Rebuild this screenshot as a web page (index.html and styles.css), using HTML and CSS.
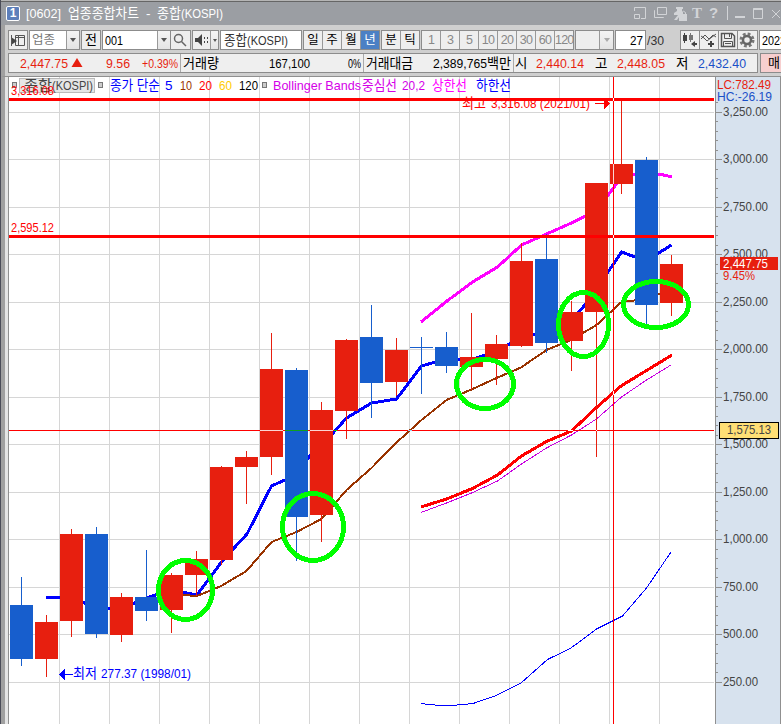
FILE: index.html
```html
<!DOCTYPE html>
<html lang="ko">
<head>
  <meta charset="UTF-8" />
  <meta name="viewport" content="width=device-width, initial-scale=1.0"/>
  <title>[0602] 업종종합차트 - 종합(KOSPI)</title>
  <link rel="stylesheet" href="styles.css">
</head>
<body>
  <div class="window">

    <!-- Title bar -->
    <div class="titlebar">
      <div class="badge">1</div>
      <svg class="title" width="210" height="22">
        <text x="1" y="15" textLength="35">[0602]</text>
        <text x="43" y="15" textLength="71">업종종합차트</text>
        <text x="121" y="15">-</text>
        <text x="132" y="15" textLength="24">종합</text>
        <text x="156" y="15" textLength="42">(KOSPI)</text>
      </svg>
      <svg class="win-icons" width="147" height="22">
        <path d="M.5 8V4.500H11.500V15.500H7M.5 11.500H5.500V15.500H.5Z"/>
        <path d="M23.500 4.500H32.500V11.500H23.500ZM21 7.500H20.500V14.500H29.500V14"/>
        <path class="solid" d="M42 4H49V6H48V9H49V11H47L43 17H40L44 12H40V10L43 8V6H42ZM45 11H53V18H45Z"/>
        <path d="M47.500 12V9.500Q49.500 7 51.500 9.500V12"/>
        <text class="serif" x="58" y="15">T</text>
        <text class="quest" x="75" y="15">?</text>
        <path d="M93.500 3V17"/>
        <path class="bold" d="M101 14H111M119.500 6H128.500"/>
        <path d="M119.500 5.500H128.500V15.500H119.500Z"/>
        <path d="M138 7L146 15M146 7L138 15"/>
      </svg>
    </div>

    <!-- Toolbar -->
    <div class="toolbar">
      <div class="btn w20">
        <svg width="18" height="18"><path class="ln" d="M6.500 4.500H15.500V14.500H6.500ZM6.500 6.500H15.500M9.500 5V14"/><path class="fl" d="M2 6L8 10L2 14Z"/><path class="ln" d="M2.500 4V15"/></svg>
      </div>
      <div class="combo c-type"><span class="dim">업종</span><i class="arrow"></i></div>
      <div class="btn w20 txt">전</div>
      <div class="combo c-code"><svg width="54" height="18"><text x="2" y="14" textLength="18">001</text></svg><i class="arrow"></i></div>
      <div class="btn w20 search">
        <svg width="18" height="18"><circle class="lens" cx="7.500" cy="7.500" r="4"/><path class="lens" d="M10.500 10.500L15 15"/></svg>
      </div>
      <div class="combo c-sound">
        <svg width="17" height="18"><path class="fl" d="M2 7H5L9 3V15L5 11H2Z"/><path class="fl" d="M11 6h1v2h-1zM11 10h1v2h-1zM14 6h1v2h-1zM14 10h1v2h-1z"/></svg>
        <i class="arrow small"></i>
      </div>
      <div class="input c-name"><svg width="80" height="18"><text x="3" y="14" textLength="23">종합</text><text x="26" y="14" textLength="41">(KOSPI)</text></svg></div>
      <div class="group">
        <span>일</span><span>주</span><span>월</span><span class="active">년</span>
      </div>
      <div class="group">
        <span>분</span><span>틱</span>
      </div>
      <div class="group nums">
        <span>1</span><span>3</span><span>5</span><span>10</span><span>20</span><span>30</span><span>60</span><span>120</span>
      </div>
      <div class="combo c-empty"><i class="arrow"></i></div>
      <div class="input c-page"><svg width="29" height="18"><text x="14" y="14" textLength="13">27</text></svg></div>
      <svg class="total" width="34" height="20"><text x="1" y="15" textLength="17">/30</text></svg>
      <div class="icons">
        <div class="btn"><svg width="18" height="18"><path class="fl" d="M2 4h4v6H2zM3 2h1v10H3z"/><path class="mid" d="M8 4h4v5H8zM9 2h1v9H9z"/><path class="fl" d="M10 13L14 10V12H16V14H14V16Z"/></svg></div>
        <div class="btn"><svg width="18" height="18"><path class="ln" d="M1 8L5 4L9 8L13 4L16 6M1 5L4 7L7 10L12 6L16 3"/><path class="fl" d="M10 10h2v2h2v2h-2v2h-2v-2h-2v-2h2z"/></svg></div>
        <div class="btn"><svg width="18" height="18"><path class="ln thick" d="M2.500 2.500H13L15.500 5V15.500H2.500Z"/><path class="ln" d="M5.500 3V7.500H12.500V3M10.500 3V6M4.500 15V10.500H13.500V15M6 12.500H12"/></svg></div>
        <div class="btn"><svg width="20" height="18"><circle class="gear" cx="9" cy="9" r="6"/><circle class="ring" cx="9" cy="9" r="4"/></svg></div>
      </div>
      <div class="input c-date"><svg width="30" height="18"><text x="2" y="14" textLength="24">2023</text></svg></div>
    </div>

    <!-- Quote strip -->
    <div class="quote">
      <div class="cells">
        <svg width="171" height="18">
          <text class="up" x="11" y="14" textLength="48">2,447.75</text>
          <path class="tri" d="M68 4L73.500 13H62.500Z"/>
          <text class="up" x="97" y="14" textLength="24">9.56</text>
          <text class="up" x="133" y="14" textLength="36">+0.39%</text>
        </svg>
        <svg class="cell" width="183" height="18">
          <text x="2" y="14" textLength="36">거래량</text>
          <text x="88" y="14" textLength="41">167,100</text>
          <text x="167" y="14" textLength="13">0%</text>
        </svg>
        <svg class="cell" width="150" height="18">
          <text x="2" y="14" textLength="47">거래대금</text>
          <text x="69" y="14" textLength="54">2,389,765</text>
          <text x="123" y="14" textLength="24">백만</text>
        </svg>
        <svg class="cell" width="244" height="18">
          <text x="1" y="14">시</text>
          <text class="up" x="22" y="14" textLength="48">2,440.14</text>
          <text x="81" y="14">고</text>
          <text class="up" x="103" y="14" textLength="48">2,448.05</text>
          <text x="162" y="14">저</text>
          <text class="down" x="184" y="14" textLength="48">2,432.40</text>
        </svg>
      </div>
      <div class="sell">매</div>
    </div>

    <!-- Chart: plot and price axis, both in window coordinates -->
    <div class="chart">
      <svg id="plot" width="706" height="647" viewBox="9 77 706 647">
        <g id="grid"></g>
        <g class="legend">
          <rect class="dot" x="12.500" y="82.500" width="4" height="5"/>
          <rect class="tag" x="19.500" y="78.500" width="75" height="14"/>
          <text x="24" y="90" textLength="28" fill="#444">종합</text>
          <text x="52" y="90" textLength="41" fill="#444">(KOSPI)</text>
          <rect class="dot" x="98.500" y="82.500" width="4" height="5"/>
          <text x="110" y="90" textLength="50" fill="#00f">종가 단순</text>
          <text x="165" y="90" fill="#00f">5</text>
          <text x="180" y="90" textLength="12" fill="#993300">10</text>
          <text x="199" y="90" textLength="13" fill="#f00">20</text>
          <text x="219" y="90" textLength="13" fill="#fc0">60</text>
          <text x="239" y="90" textLength="19" fill="#000">120</text>
          <rect class="dot" x="262.500" y="82.500" width="4" height="5"/>
          <text x="273" y="90" textLength="88" fill="#d400e8">Bollinger Bands</text>
          <text x="362" y="90" textLength="35" fill="#d400e8">중심선</text>
          <text x="402" y="90" textLength="23" fill="#d400e8">20,2</text>
          <text x="432" y="90" textLength="35" fill="#f0f">상한선</text>
          <text x="476" y="90" textLength="35" fill="#00f">하한선</text>
        </g>
        <text class="red" x="11" y="95" textLength="43">3,316.08</text>
        <text class="red" x="11" y="232" textLength="43">2,595.12</text>
        <text class="red" x="462" y="108" textLength="24">최고</text>
        <text class="red" x="491" y="108" textLength="99">3,316.08 (2021/01)</text>
        <path class="red" d="M595 103H604V98L610 103.500L604 109V104H595Z"/>
        <text class="blue" x="73" y="678" textLength="24">최저</text>
        <text class="blue" x="101" y="678" textLength="90">277.37 (1998/01)</text>
        <path class="blue" d="M73 674H65V669L59 674.500L65 680V675H73Z"/>
        <g id="lines"></g>
        <g id="candles"></g>
        <g class="levels">
          <rect x="9" y="98" width="705" height="3"/>
          <rect x="9" y="235" width="705" height="3"/>
          <rect x="9" y="430" width="705" height="1"/>
          <rect x="613" y="77" width="1" height="647"/>
        </g>
        <g id="crossings"></g>
        <g class="marks">
          <ellipse cx="185.500" cy="590" rx="27" ry="29.500"/>
          <ellipse cx="313" cy="527" rx="30.500" ry="33.500"/>
          <ellipse cx="485" cy="384" rx="28.500" ry="24.500"/>
          <ellipse cx="583.500" cy="324.500" rx="25" ry="32"/>
          <ellipse cx="656" cy="304.500" rx="32.500" ry="23"/>
        </g>
      </svg>
      <svg id="axis" width="66" height="647" viewBox="715 77 66 647">
        <rect class="axis-bg" x="715" y="77" width="66" height="647"/>
        <rect class="axis-line" x="715" y="77" width="1" height="647"/>
        <rect class="axis-line" x="780" y="77" width="1" height="647"/>
        <g id="ticks"></g>
        <text class="up" x="717" y="89" textLength="54">LC:782.49</text>
        <text class="down" x="717" y="101" textLength="55">HC:-26.19</text>
        <rect class="last" x="720" y="257" width="58" height="13"/>
        <text class="white" x="723" y="268" textLength="45">2,447.75</text>
        <text class="up" x="723" y="280" textLength="32">9.45%</text>
        <rect class="cursor" x="719.500" y="422.500" width="59" height="16"/>
        <text class="tick" x="727" y="434" textLength="44">1,575.13</text>
      </svg>
    </div>
  </div>

  <script>
    const NS = "http://www.w3.org/2000/svg";
    const UP = "#e71f0f", DOWN = "#175ecd";

    // body top, body bottom, wick top, wick bottom, rising
    const CANDLES = [
      [605, 659, 577, 666, 0],
      [622, 659, 615, 677, 1],
      [534, 621, 529, 637, 1],
      [534, 634, 527, 638, 0],
      [597, 635, 593, 642, 1],
      [597, 611, 550, 621, 0],
      [575, 610, 573, 633, 1],
      [559, 575, 551, 596, 1],
      [467, 560, 466, 565, 1],
      [457, 467, 451, 504, 1],
      [369, 457, 333, 475, 1],
      [370, 517, 368, 561, 0],
      [410, 515, 402, 542, 1],
      [340, 411, 339, 439, 1],
      [337, 383, 305, 418, 0],
      [350, 382, 338, 396, 1],
      [347, 348, 337, 394, 0],
      [347, 366, 332, 373, 0],
      [357, 367, 313, 390, 1],
      [344, 359, 335, 385, 1],
      [261, 346, 243, 347, 1],
      [259, 343, 234, 353, 0],
      [312, 341, 301, 371, 1],
      [183, 312, 183, 457, 1],
      [164, 184, 100, 194, 1],
      [160, 305, 157, 324, 0],
      [264, 303, 255, 316, 1],
    ];

    const LINES = [
      {color: "#00f", width: 3, pts: "46,597 71,597 96,608 121,609 146,598 171,590 197,595 223,560 247,534 271.5,486 296,475 308,458 333,433 346.5,418 371.5,403 396.5,399 421.5,366 446,359 471,360 496,351 521,338 546,331 571,320 585,305 608,272 621.5,252 646,261 671.5,245"},
      {color: "#993300", width: 2, pts: "171,592 183,595 197,596 221,586 246.5,571 271.5,542 296.5,532 321.5,519 346.5,490 371.5,468 396.5,442.5 421.5,420 446.5,400 471.5,389.5 496.5,378 521,367.5 546.5,350 571,340 596.5,325 621.5,302 646,299 661,293"},
      {color: "#f0f", width: 3, pts: "421,322 447,301 472.5,282 497.5,267 521.5,245 546.5,234 571.5,223 596,211 621,178 635,174 659,174 672,177"},
      {color: "#f00", width: 3, pts: "421,507 446.5,499 472.5,488.500 497.5,475 521.5,456 546.5,441.500 571.5,431 596.5,407.500 621,386 672,355"},
      {color: "#c800e0", width: 1, pts: "421,512.5 446.5,503 471.5,493 497.5,481 521.5,464 546.5,448 571.5,435 596.5,419 621.5,397 646.5,380 671,365"},
      {color: "#00f", width: 1, pts: "421,703.5 428,704.5 441,705.5 452,705.5 473,703.5 495,696 521,683 547.5,659.5 571,648 596.5,629 622.5,616 646.5,588 671,552"},
    ];

    // spots where the crosshair inverts what lies under it
    const CROSSINGS = [
      [260, 430, 23, 1, "#fbd5d2"],
      [285, 430, 23, 1, "#0fa01f"],
      [310, 430, 23, 1, "#fbd5d2"],
      [334, 430, 3, 1, "#00e000"],
      [408, 430, 4, 1, "#9fd0f5"],
      [568, 430, 5, 1, "#fff"],
      [596, 430, 1, 1, "#fff"],
      [613, 98, 1, 3, "#fff"],
      [613, 164, 1, 20, "#fbd5d2"],
      [613, 235, 1, 3, "#fff"],
      [613, 391, 1, 4, "#fff"],
    ];

    function add(parent, name, attrs, text) {
      const el = document.createElementNS(NS, name);
      for (const key in attrs) el.setAttribute(key, attrs[key]);
      if (text) el.textContent = text;
      document.getElementById(parent).appendChild(el);
    }

    function rect(parent, x, y, width, height, fill) {
      add(parent, "rect", {x, y, width, height, fill});
    }

    function drawGrid() {
      for (let x = 59; x < 700; x += 50) rect("grid", x, 77, 1, 647, "#d6d6d6");
      for (let v = 3250; v > 0; v -= 250) {
        rect("grid", 9, Math.floor(112.2 + (3250 - v) * 0.19), 705, 1, "#d6d6d6");
      }
    }

    function drawCandles() {
      CANDLES.forEach(([top, bottom, high, low, rising], i) => {
        const x = 10 + i * 25;
        const fill = rising ? UP : DOWN;
        rect("candles", x + 11, high, 1, low - high, fill);
        rect("candles", x, top, 23, bottom - top, fill);
      });
    }

    function drawLines() {
      LINES.forEach(l => {
        add("lines", "polyline", {points: l.pts, stroke: l.color, "stroke-width": l.width});
      });
    }

    function drawTicks() {
      for (let v = 3300; v >= 250; v -= 50) {
        const y = Math.floor(112.2 + (3250 - v) * 0.19);
        const major = v % 250 === 0;
        rect("ticks", 716, y, major ? 6 : 2, 1, "#909090");
        if (major) {
          add("ticks", "text", {class: "tick", x: 723, y: y + 4, textLength: v < 1000 ? 35 : 45},
            v.toLocaleString("en-US", {minimumFractionDigits: 2}));
        }
      }
    }

    drawGrid();
    drawLines();
    drawCandles();
    CROSSINGS.forEach(c => rect("crossings", ...c));
    drawTicks();
    document.querySelectorAll("text[textLength]").forEach(t => t.setAttribute("lengthAdjust", "spacingAndGlyphs"));
  </script>
</body>
</html>
```

FILE: styles.css
```css
* {
  box-sizing: border-box;
  margin: 0;
  padding: 0;
}

body {
  width: 781px;
  height: 724px;
  overflow: hidden;
  background: #cfcfcf;
  font-family: "Liberation Sans", "Noto Sans CJK KR", sans-serif;
  font-size: 13px;
  color: #000;
}

svg {
  display: block;
  flex: none;
}

svg text {
  font-size: 13.5px;
}

.window {
  width: 781px;
  height: 724px;
  overflow: hidden;
  border-left: 1px solid #4a4c58;
}

/* title bar */
.titlebar {
  display: flex;
  align-items: center;
  height: 25px;
  padding: 1px 0 0 5px;
  background: #9b9ea3;
  border-top: 1px solid #b5b5b5;
  box-shadow: inset 0 1px 0 #666;
}

.badge {
  width: 14px;
  height: 15px;
  margin-right: 5px;
  border: 1px solid #fff;
  border-radius: 2px;
  background: #5d7fbb;
  color: #fff;
  font-size: 12px;
  font-weight: bold;
  line-height: 13px;
  text-align: center;
}

.title text {
  fill: #fff;
}

.win-icons {
  margin-left: auto;
  fill: none;
  stroke: #d2d4d7;
}

.win-icons .solid {
  fill: #d2d4d7;
  stroke: none;
}

.win-icons .bold {
  stroke-width: 2;
}

.win-icons text {
  fill: #d2d4d7;
  stroke: none;
  font-size: 15px;
  font-weight: bold;
}

.win-icons .serif {
  font-family: "Liberation Serif", serif;
}

/* toolbar */
.toolbar {
  display: flex;
  height: 28px;
  padding: 5px 0 0 3px;
  border-left: 4px solid #a0a0a0;
}

.btn,
.combo,
.input,
.group {
  flex: none;
  display: flex;
  height: 20px;
  border: 1px solid #8c8c8c;
}

.btn {
  width: 20px;
  background: #eee;
  overflow: hidden;
}

.txt {
  justify-content: center;
  line-height: 18px;
}

.combo,
.input {
  background: #fff;
  overflow: hidden;
}

.arrow {
  width: 13px;
  margin-left: auto;
  background: linear-gradient(#f4f4f4, #e4e4e4);
  border-left: 1px solid #999;
  display: flex;
  align-items: center;
  justify-content: center;
}

.arrow::after {
  content: "";
  border: 3.5px solid transparent;
  border-top: 4px solid #555;
  border-bottom: 0;
}

.arrow.small {
  width: 9px;
}

.arrow.small::after {
  border-width: 3px 2.5px 0;
}

.c-type {
  width: 51px;
  margin: 0 1px;
}

.dim {
  padding-left: 2px;
  color: #777;
  font-size: 12.5px;
  line-height: 18px;
}

.c-code {
  width: 69px;
  margin-left: 1px;
}

.search {
  margin-right: 1px;
  border-left: 0;
}

.c-sound {
  width: 27px;
  margin-right: 1px;
  background: #eee;
}

.c-name {
  width: 82px;
  margin-right: 1px;
}

.c-name text {
  fill: #333;
}

.group {
  background: #eee;
  margin-right: 1px;
}

.group span {
  width: 19px;
  border-right: 1px solid #999;
  text-align: center;
  line-height: 19px;
  font-size: 12.5px;
}

.group span:last-child {
  border-right: 0;
  width: 18px;
}

.group .active {
  background: #4b80c4;
  color: #fff;
}

.nums span {
  color: #888;
  letter-spacing: -0.8px;
}

.c-empty {
  width: 39px;
  background: #eee;
}

.c-empty .arrow {
  width: 14px;
}

.c-empty .arrow::after {
  border-top-color: #aaa;
}

.c-page {
  width: 31px;
  margin-left: 1px;
}

.total text {
  fill: #333;
}

.icons {
  display: flex;
}

.icons .btn + .btn {
  border-left: 0;
  width: 19px;
}

.icons .btn:last-child {
  width: 20px;
}

.c-date {
  width: 30px;
  margin-left: 1px;
}

.ln {
  fill: none;
  stroke: #555;
}

.thick {
  stroke-width: 1.5;
}

.fl {
  fill: #444;
}

.mid {
  fill: #777;
}

.lens {
  fill: none;
  stroke: #666;
  stroke-width: 1.5;
}

.gear {
  fill: none;
  stroke: #777;
  stroke-width: 3;
  stroke-dasharray: 2.7 2;
}

.ring {
  fill: none;
  stroke: #666;
  stroke-width: 2.5;
}

/* quote strip */
.quote {
  display: flex;
  height: 23px;
  padding-left: 3px;
  border-left: 4px solid #a0a0a0;
}

.cells {
  display: flex;
  flex: none;
  width: 750px;
  height: 20px;
  border: 1px solid #8c8c8c;
  background: #efefef;
  overflow: hidden;
}

.cells .cell {
  border-left: 1px solid #aaa;
}

.up,
.tri {
  fill: #e71f0f;
}

.down {
  fill: #1a50c8;
}

.sell {
  flex: none;
  width: 30px;
  height: 20px;
  margin-left: 2px;
  padding-left: 7px;
  border: 1px solid #8c8c8c;
  background: #f7cfcf;
  line-height: 18px;
}

/* chart */
.chart {
  display: flex;
  height: 648px;
  border-left: 4px solid #a0a0a0;
  border-top: 1px solid #909090;
  padding-left: 3px;
  background: #e5e5e5;
}

#plot {
  background: #fff;
  box-shadow: -1px 0 0 #909090;
  margin-left: 1px;
  shape-rendering: crispEdges;
}

#lines polyline {
  fill: none;
  stroke-linejoin: round;
}

.dot {
  fill: #ccc;
  stroke: #777;
}

.tag {
  fill: #e6e6e6;
  stroke: #bbb;
}

.red,
.levels {
  fill: #f00;
}

.blue {
  fill: #00f;
}

.marks {
  fill: none;
  stroke: #0f0;
  stroke-width: 5;
}

.axis-bg {
  fill: #d7e2ee;
}

.axis-line {
  fill: #909090;
}

#axis {
  shape-rendering: crispEdges;
}

.tick {
  fill: #444;
}

.last {
  fill: #e71f0f;
}

.white {
  fill: #fff;
}

.cursor {
  fill: #ffdf75;
  stroke: #000;
}
```
